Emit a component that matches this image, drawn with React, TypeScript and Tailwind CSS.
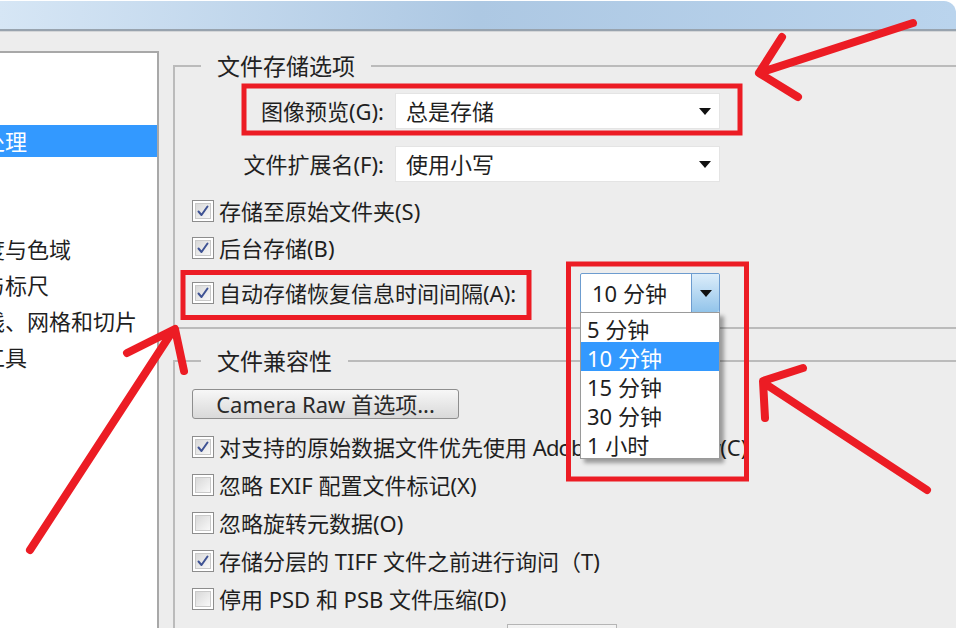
import type { ReactNode } from "react";

const listItems = [
  "常规",
  "界面",
  "文件处理",
  "性能",
  "光标",
  "透明度与色域",
  "单位与标尺",
  "参考线、网格和切片",
  "增效工具",
  "文字",
  "3D",
];

function CheckBox({ checked }: { checked: boolean }) {
  return (
    <span className="flex h-[22px] w-[22px] shrink-0 items-center justify-center border border-[#8d8d8d] bg-white p-[2px]">
      <span className="flex h-full w-full items-center justify-center border border-[#c9c9c9] bg-linear-to-br from-[#d9d9d9] to-[#f8f8f8]">
        {checked && (
          <svg width="14" height="14" viewBox="0 0 14 14" fill="none">
            <path d="M2.5 7.5 L5.5 11 L11.5 2.5" stroke="#3f5394" strokeWidth="2" strokeLinecap="round" strokeLinejoin="round" />
          </svg>
        )}
      </span>
    </span>
  );
}

function CheckRow({ checked, children, h = "h-[38px]" }: { checked: boolean; children: ReactNode; h?: string }) {
  return (
    <div className={`flex ${h} items-center gap-[5px] pl-[17px]`}>
      <CheckBox checked={checked} />
      <span className="whitespace-nowrap text-[22px] leading-none text-[#1f1f1f]">{children}</span>
    </div>
  );
}

function Triangle() {
  return (
    <svg width="12" height="7" viewBox="0 0 12 7">
      <path d="M0 0 H12 L6 7 Z" fill="#111" />
    </svg>
  );
}

function SelectBox({ label, value }: { label: string; value: string }) {
  return (
    <div className="flex items-center">
      <span className="w-[210px] whitespace-nowrap pr-[1px] text-right text-[22px] leading-none text-[#1f1f1f]">{label}</span>
      <div className="ml-[10px] flex h-[36px] w-[325px] items-center justify-between border border-[#e4e4e4] bg-white pl-[10px] pr-[8px]">
        <span className="text-[22px] leading-none text-[#1f1f1f]">{value}</span>
        <Triangle />
      </div>
    </div>
  );
}

function Legend({ children }: { children: ReactNode }) {
  return <legend className="ml-[26px] px-[16px] text-[23px] leading-[28px] text-[#222]">{children}</legend>;
}

export default function App() {
  return (
    <div className="relative h-[628px] w-[956px] overflow-hidden bg-white font-['Noto_Sans','Noto_Sans_CJK_SC',sans-serif]">
      <div className="mt-[1px] flex h-[627px] flex-col overflow-hidden rounded-tr-[12px]">
        {/* title bar */}
        <div className="h-[28px] shrink-0 bg-linear-to-r from-[#d6e6f5] via-[#adc8e3] to-[#bad4ed]" />
        <div className="h-[2px] shrink-0 bg-[#98a3ae]" />
        <div className="h-[1px] shrink-0 bg-[#d4d6d8]" />

        <div className="flex flex-1 bg-[#ededed]">
          {/* category list */}
          <div className="w-[159px] shrink-0 pt-[19px]">
            <div className="flex h-full flex-col gap-[4px] overflow-hidden border-r-2 border-t-2 border-[#a8a8a8] bg-white">
              {listItems.map((item) => (
                <div
                  key={item}
                  className={`h-[32px] shrink-0 whitespace-nowrap text-[22px] leading-[32px] ${
                    item === "文件处理" ? "bg-[#3399ff] text-white" : "text-[#1f1f1f]"
                  }`}
                >
                  <span className="-ml-[61px]">{item}</span>
                </div>
              ))}
            </div>
          </div>

          {/* options */}
          <div className="flex-1 overflow-hidden pl-[14px] pt-[20px]">
            <fieldset className="w-[830px] border-2 border-[#bbbbbb] pb-[14px] pt-[13px]">
              <Legend>文件存储选项</Legend>
              <SelectBox label="图像预览(G):" value="总是存储" />
              <div className="mt-[17px]">
                <SelectBox label="文件扩展名(F):" value="使用小写" />
              </div>
              <div className="mt-[10px]">
                <CheckRow checked h="h-[37px]">存储至原始文件夹(S)</CheckRow>
                <CheckRow checked h="h-[37px]">后台存储(B)</CheckRow>
              </div>
              <div className="mt-[7px] flex h-[40px] items-center pl-[17px]">
                <div className="flex w-[388px] items-center gap-[5px]">
                  <CheckBox checked />
                  <span className="whitespace-nowrap text-[22px] leading-none text-[#1f1f1f]">自动存储恢复信息时间间隔(A):</span>
                </div>
                <div className="relative z-10 flex h-[40px] w-[140px] rounded-[2px] border border-[#6d9ccf] bg-white">
                  <span className="flex-1 pl-[11px] text-[22px] leading-[38px] text-[#1f1f1f]">10 分钟</span>
                  <span className="flex w-[28px] items-center justify-center rounded-r-[2px] border-l border-[#6d9ccf] bg-linear-to-b from-[#dcedfa] to-[#92c4ea]">
                    <Triangle />
                  </span>
                  <div className="absolute left-[-1px] top-full w-[140px] border border-[#9a9a9a] bg-white shadow-[4px_4px_4px_rgba(0,0,0,0.35)]">
                    {["5 分钟", "10 分钟", "15 分钟", "30 分钟", "1 小时"].map((t) => (
                      <div
                        key={t}
                        className={`h-[29px] pl-[6px] pt-[3px] text-[22px] leading-[26px] ${
                          t === "10 分钟" ? "bg-[#3399ff] text-white" : "text-[#1f1f1f]"
                        }`}
                      >
                        {t}
                      </div>
                    ))}
                  </div>
                </div>
              </div>
            </fieldset>

            <fieldset className="mt-[18px] w-[830px] border-2 border-[#bbbbbb] pt-[14px]">
              <Legend>文件兼容性</Legend>
              <div className="pl-[17px]">
                <button className="h-[30px] w-[267px] rounded-[3px] border border-[#8e8e8e] bg-linear-to-b from-[#f7f7f7] to-[#d9d9d9] text-[22px] leading-none text-[#2a2a2a]">
                  Camera Raw 首选项...
                </button>
              </div>
              <div className="mt-[9px]">
                <CheckRow checked>
                  对支持的原始数据文件优先使用 <span className="tracking-[-0.9px]">Adobe Camera Raw</span>(C)
                </CheckRow>
                <CheckRow checked={false}>忽略 EXIF 配置文件标记(X)</CheckRow>
                <CheckRow checked={false}>忽略旋转元数据(O)</CheckRow>
                <CheckRow checked>存储分层的 TIFF 文件之前进行询问（T)</CheckRow>
                <CheckRow checked={false}>停用 PSD 和 PSB 文件压缩(D)</CheckRow>
              </div>
              <div className="mt-[6px] flex items-start">
                <span className="w-[322px] whitespace-nowrap pt-[8px] text-right text-[22px] leading-[30px] text-[#1f1f1f]">最大兼容 PSD 和 PSB 文件(X):</span>
                <div className="ml-[10px] h-[34px] w-[110px] border border-[#b5b5b5] bg-linear-to-b from-[#f4f4f4] to-[#dddddd]" />
              </div>
            </fieldset>
          </div>
        </div>
      </div>

      {/* red annotations */}
      <svg
        className="pointer-events-none absolute inset-0 z-20"
        width="956"
        height="628"
        viewBox="0 0 956 628"
        fill="none"
        stroke="#ec1c24"
      >
        <rect x="244" y="86" width="496" height="47" strokeWidth="5" />
        <rect x="183" y="272.5" width="346" height="45" strokeWidth="5" />
        <rect x="568.5" y="264" width="178" height="215" strokeWidth="5" />
        <g strokeWidth="8" strokeLinecap="round" strokeLinejoin="round">
          <path d="M913 23 L759 73 M782 37 L759 73 L798 97" />
          <path d="M30 550 L172 332 M127 353 L175 329 L184 371" />
          <path d="M927 490 L764 383 M803 368 L763 381 L765 418" />
        </g>
      </svg>
    </div>
  );
}
